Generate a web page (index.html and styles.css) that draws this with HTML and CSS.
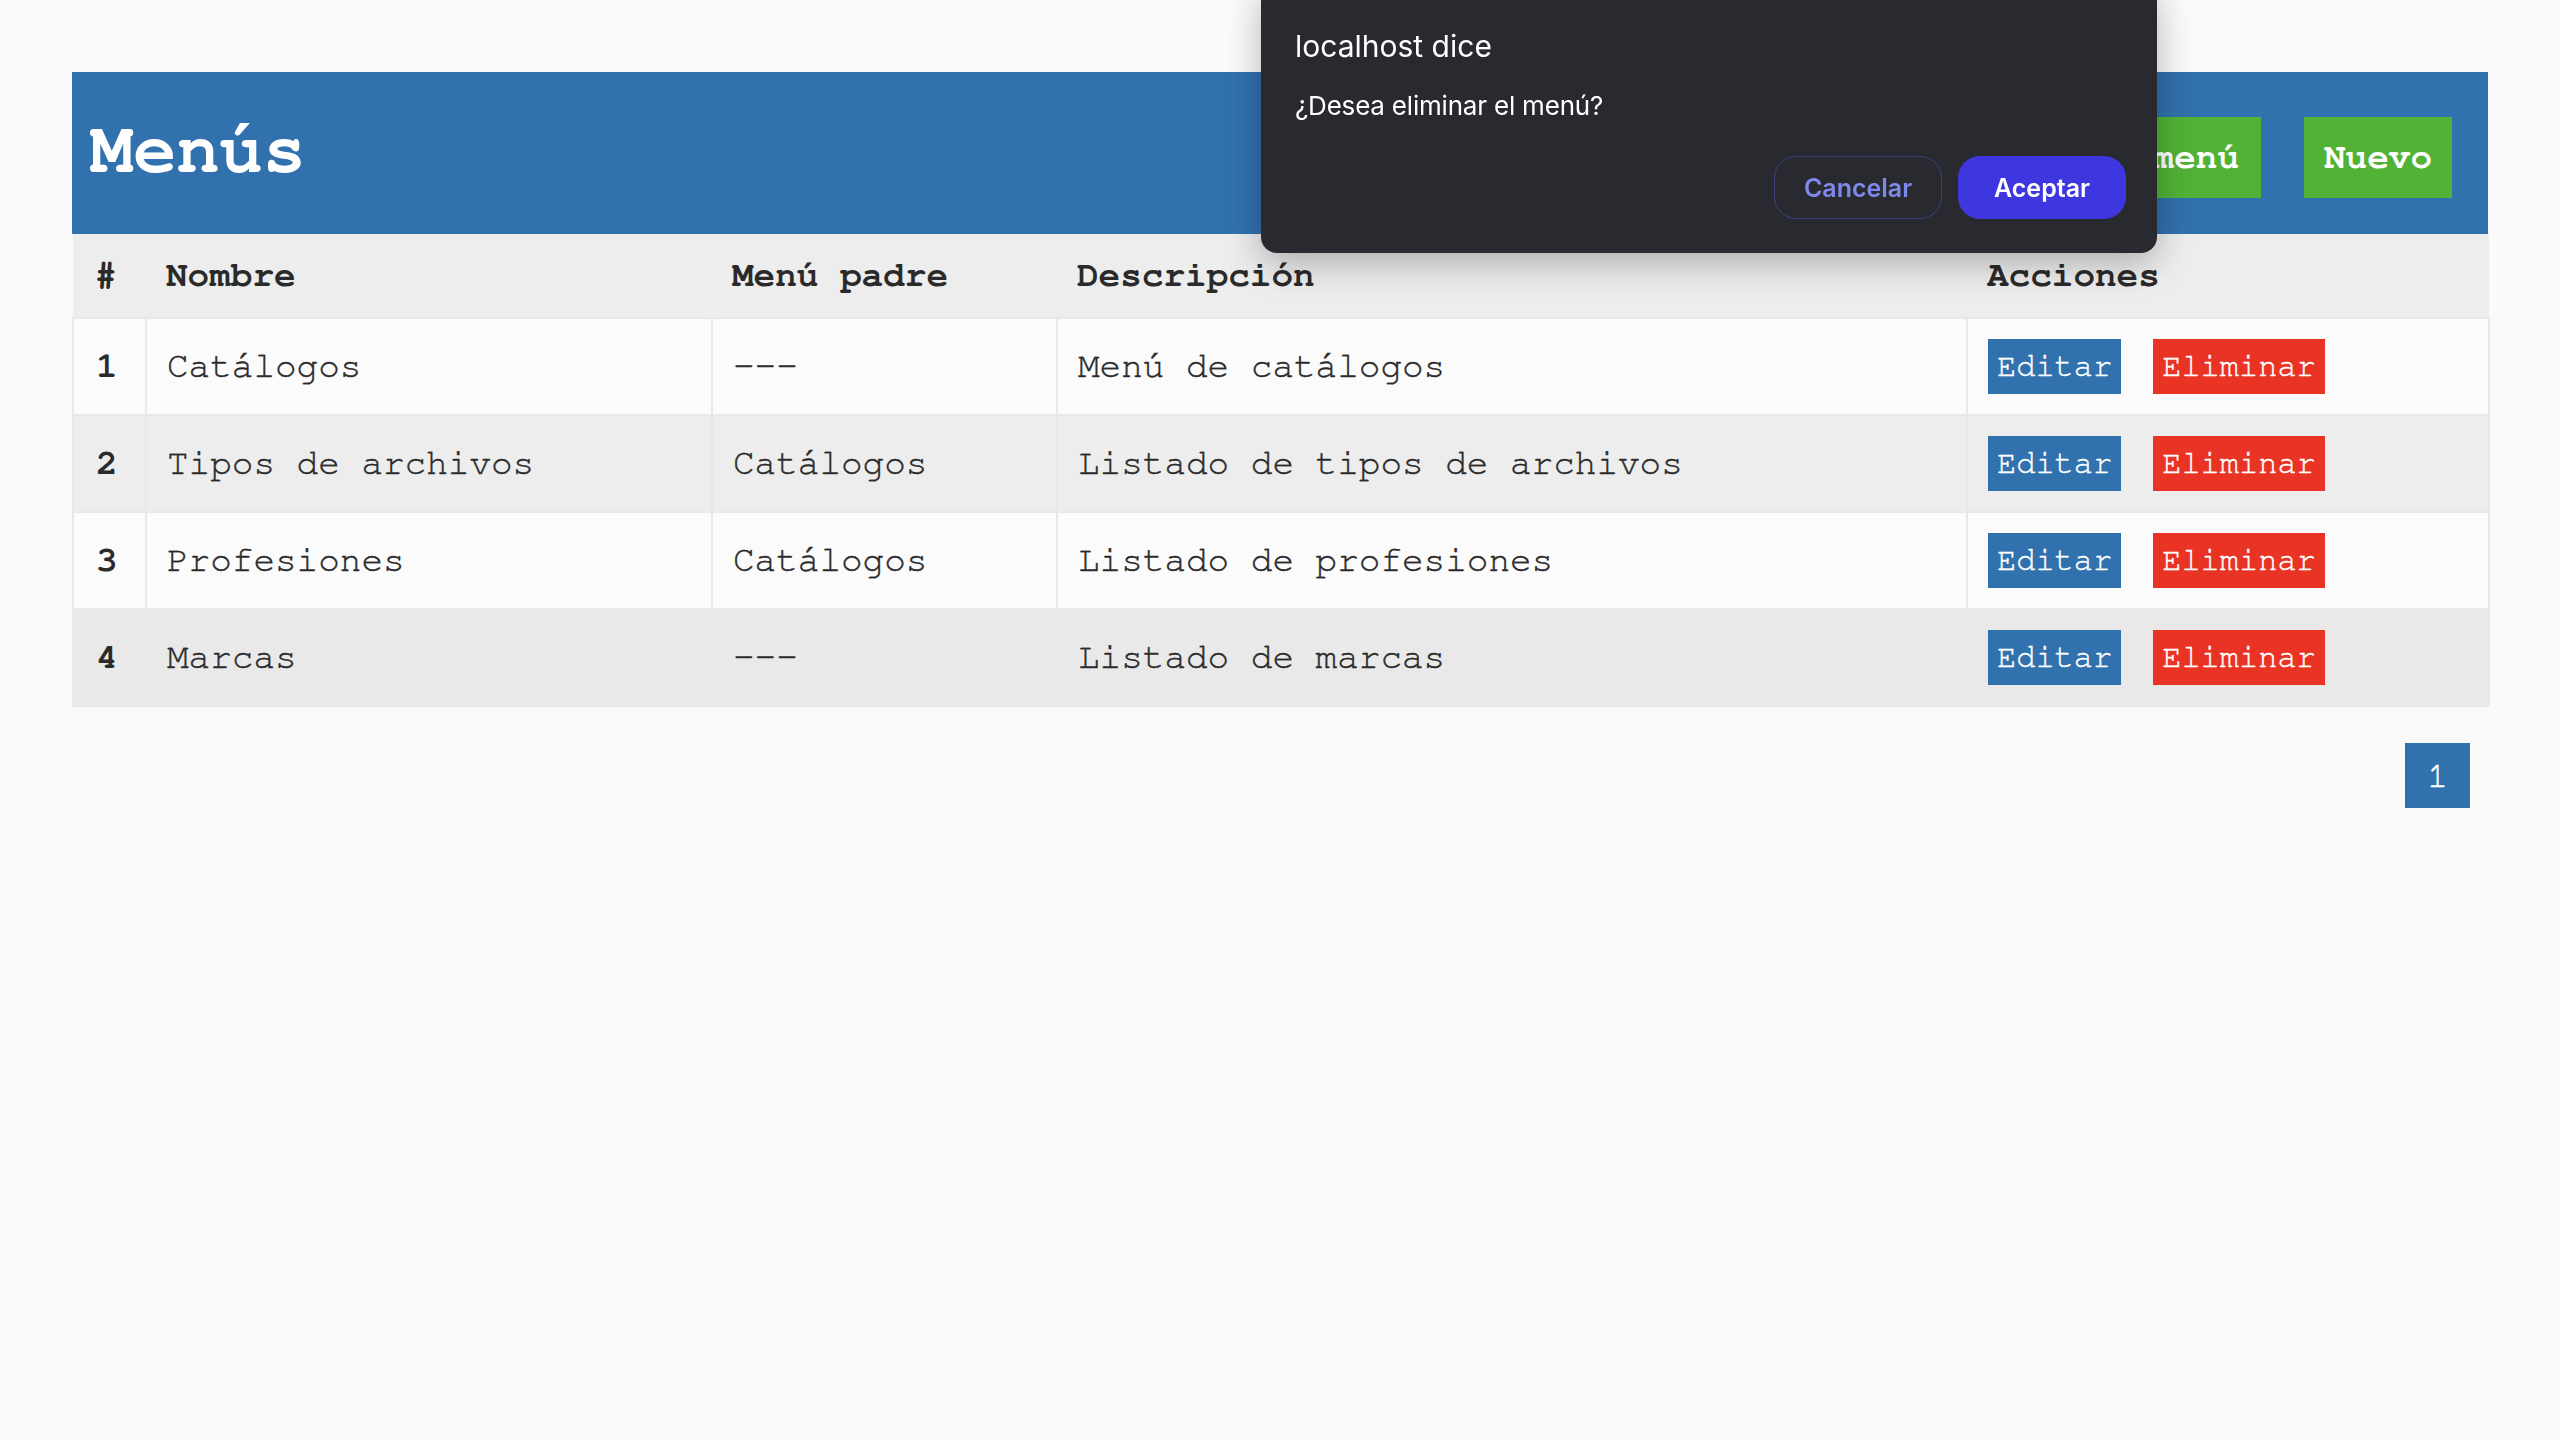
FILE: index.html
```html
<!DOCTYPE html>
<html lang="es">
<head>
<meta charset="utf-8">
<title>Menús</title>
<link rel="stylesheet" href="styles.css">
</head>
<body>
<main class="page">
  <header class="topbar">
    <h1 class="title">Menús</h1>
    <div class="top-actions">
      <button class="btn-green btn-sub">menú</button>
      <button class="btn-green">Nuevo</button>
    </div>
  </header>
  <table class="grid">
    <colgroup>
      <col class="c-num"><col class="c-name"><col class="c-parent"><col class="c-desc"><col class="c-act">
    </colgroup>
    <thead>
      <tr><th>#</th><th>Nombre</th><th>Menú padre</th><th>Descripción</th><th>Acciones</th></tr>
    </thead>
    <tbody>
      <tr class="odd">
        <td class="num">1</td><td>Catálogos</td><td>---</td><td>Menú de catálogos</td>
        <td><div class="acts"><button class="btn-edit">Editar</button><button class="btn-del">Eliminar</button></div></td>
      </tr>
      <tr class="even">
        <td class="num">2</td><td>Tipos de archivos</td><td>Catálogos</td><td>Listado de tipos de archivos</td>
        <td><div class="acts"><button class="btn-edit">Editar</button><button class="btn-del">Eliminar</button></div></td>
      </tr>
      <tr class="odd">
        <td class="num">3</td><td>Profesiones</td><td>Catálogos</td><td>Listado de profesiones</td>
        <td><div class="acts"><button class="btn-edit">Editar</button><button class="btn-del">Eliminar</button></div></td>
      </tr>
      <tr class="hover">
        <td class="num">4</td><td>Marcas</td><td>---</td><td>Listado de marcas</td>
        <td><div class="acts"><button class="btn-edit">Editar</button><button class="btn-del">Eliminar</button></div></td>
      </tr>
    </tbody>
  </table>
  <nav class="pager"><span class="page-num">1</span></nav>
</main>

<div class="dialog">
  <div class="dlg-title">localhost dice</div>
  <div class="dlg-msg">¿Desea eliminar el menú?</div>
  <div class="dlg-btns">
    <button class="dlg-cancel">Cancelar</button>
    <button class="dlg-ok">Aceptar</button>
  </div>
</div>
</body>
</html>
```
FILE: styles.css
```css
html, body {
  margin: 0;
  padding: 0;
  background: #fafafa;
}
body {
  font-family: "Nimbus Mono PS", "Nimbus Mono L", "FreeMono", "Courier", "Liberation Mono", monospace;
  color: #2a2a2a;
}
.page {
  padding: 72px;
}
.topbar {
  display: flex;
  align-items: center;
  justify-content: space-between;
  height: 162px;
  background: #3171ad;
  padding: 0 36px 0 18px;
  box-sizing: border-box;
}
.title {
  margin: -6px 0 0 0;
  font-size: 72px;
  line-height: 1;
  font-weight: bold;
  color: #fff;
}
.top-actions {
  display: flex;
  gap: 43px;
  margin-top: 9px;
}
.btn-green {
  font-family: inherit;
  font-weight: bold;
  font-size: 36px;
  line-height: 41px;
  padding: 20px 20px;
  border: 0;
  background: #52b236;
  color: #fff;
}
.btn-sub {
  padding-right: 22px;
}
.grid {
  width: 2416px;
  border-collapse: collapse;
  table-layout: fixed;
  font-size: 36px;
}
.c-num { width: 73px; }
.c-name { width: 566px; }
.c-parent { width: 345px; }
.c-desc { width: 910px; }
.c-act { width: 522px; }
.grid th {
  background: #ededed;
  text-align: left;
  font-weight: bold;
  padding: 21px 20px;
  line-height: 41px;
  white-space: nowrap;
}
.grid td {
  border: 2px solid #e8e8e8;
  padding: 20px 20px;
  line-height: 41px;
  height: 55px;
  vertical-align: middle;
  white-space: nowrap;
  -webkit-text-stroke: 0.4px currentColor;
}
.grid td.num {
  font-weight: bold;
  padding-left: 22px;
  -webkit-text-stroke: 0;
}
.grid th:first-child {
  padding-left: 22px;
}
.odd td { background: #fbfbfb; }
.even td { background: #ededed; }
.hover td { background: #e9e9e9; border-color: #e9e9e9; }
.acts {
  display: flex;
  gap: 32px;
}
.btn-edit, .btn-del {
  font-family: inherit;
  font-size: 32px;
  height: 55px;
  line-height: 55px;
  padding: 0 9px;
  border: 0;
  color: #fff;
  -webkit-text-stroke: 0.4px #fff;
}
.btn-edit { background: #3171ad; }
.btn-del { background: #e93324; }
.pager {
  display: flex;
  justify-content: flex-end;
  padding-right: 18px;
  margin-top: 36px;
}
.page-num {
  width: 65px;
  height: 65px;
  background: #3171ad;
  color: #fff;
  font-size: 36px;
  display: flex;
  align-items: center;
  justify-content: center;
  -webkit-text-stroke: 0.4px #fff;
}
.dialog {
  position: fixed;
  left: 1261px;
  top: -16px;
  width: 896px;
  box-sizing: border-box;
  padding: 44px 31px 34px 34px;
  background: #292a2f;
  border-radius: 16px;
  box-shadow: 0 10px 36px rgba(0, 0, 0, 0.28);
  font-family: "Inter", "Noto Sans", sans-serif;
  color: #fff;
}
.dlg-title {
  font-size: 30px;
  line-height: 36px;
}
.dlg-msg {
  margin-top: 26px;
  font-size: 26px;
  line-height: 32px;
  letter-spacing: -0.2px;
}
.dlg-btns {
  margin-top: 34px;
  display: flex;
  justify-content: flex-end;
  gap: 16px;
}
.dlg-cancel, .dlg-ok {
  width: 168px;
  height: 63px;
  border-radius: 22px;
  font-family: "Inter", "Noto Sans", sans-serif;
  font-size: 25px;
  font-weight: 600;
}
.dlg-cancel {
  background: transparent;
  border: 1.5px solid #3d4080;
  color: #7e89ec;
}
.dlg-ok {
  background: #3e37e0;
  border: 0;
  color: #fff;
}
```
